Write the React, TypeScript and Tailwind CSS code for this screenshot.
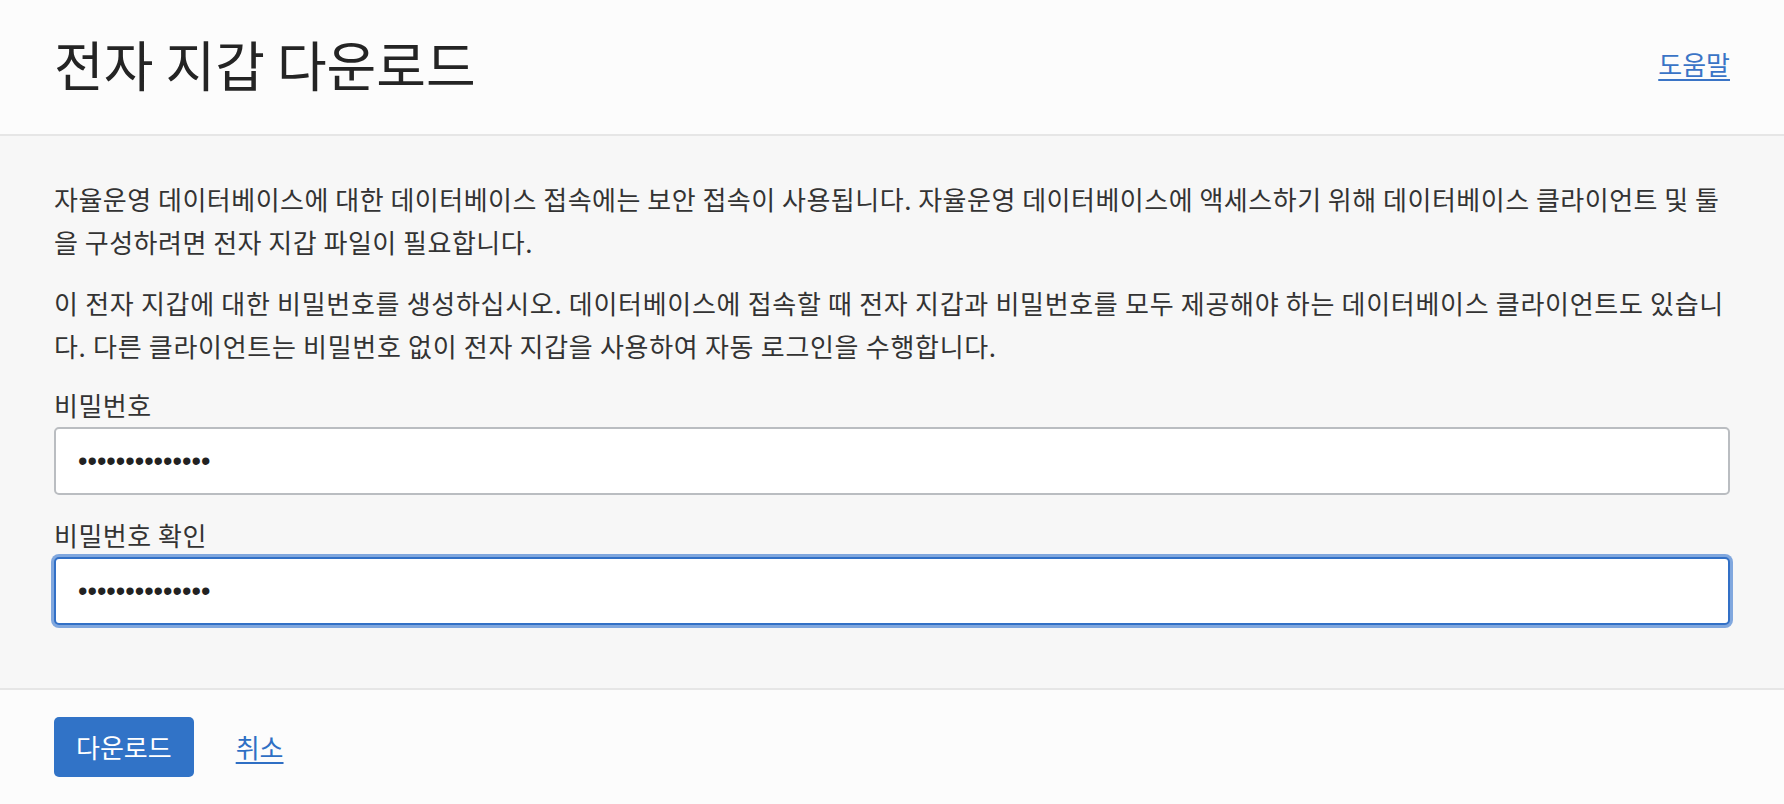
export default function App() {
  return (
    <div className="min-h-screen bg-[#fcfcfc] font-['Noto_Sans_CJK_KR',sans-serif] text-[#333333]">
      <header className="flex h-[136px] items-center justify-between border-b-2 border-[#e6e6e6] bg-[#fcfcfc] px-[54px] pb-[6px]">
        <h1 className="text-[54px] leading-none font-normal text-[#242424]">전자 지갑 다운로드</h1>
        <a href="#" className="text-[26px] leading-none text-[#3a74c6] underline decoration-2 underline-offset-[4px]">
          도움말
        </a>
      </header>

      <main className="border-b-2 border-[#e6e6e6] bg-[#f7f7f7] px-[54px] pt-[41px] pb-[63px]">
        <p className="text-[26px] leading-[43px] tracking-[0.5px]">
          자율운영 데이터베이스에 대한 데이터베이스 접속에는 보안 접속이 사용됩니다. 자율운영 데이터베이스에 액세스하기 위해 데이터베이스 클라이언트 및 툴
          <br />을 구성하려면 전자 지갑 파일이 필요합니다.
        </p>
        <p className="mt-[18px] text-[26px] leading-[43px] tracking-[0.7px]">
          이 전자 지갑에 대한 비밀번호를 생성하십시오. 데이터베이스에 접속할 때 전자 지갑과 비밀번호를 모두 제공해야 하는 데이터베이스 클라이언트도 있습니
          <br />다. 다른 클라이언트는 비밀번호 없이 전자 지갑을 사용하여 자동 로그인을 수행합니다.
        </p>

        <label htmlFor="pw" className="mt-[22px] block text-[26px] leading-[32px] tracking-[0.5px]">
          비밀번호
        </label>
        <input
          id="pw"
          type="password"
          readOnly
          value="abcdefghijklmn"
          className="mt-[6px] block h-[68px] w-full rounded-[5px] border-2 border-[#babdc1] bg-white px-[22px] font-['Liberation_Sans',sans-serif] text-[27px] text-[#222] outline-none"
        />

        <label htmlFor="pw2" className="mt-[24px] block text-[26px] leading-[32px] tracking-[0.5px]">
          비밀번호 확인
        </label>
        <input
          id="pw2"
          type="password"
          readOnly
          value="abcdefghijklmn"
          className="mt-[6px] block h-[68px] w-full rounded-[5px] border-2 border-[#3270c6] bg-white px-[22px] font-['Liberation_Sans',sans-serif] text-[27px] text-[#222] shadow-[0_0_0_3px_#80a7de] outline-none"
        />
      </main>

      <footer className="flex h-[114px] items-center gap-[42px] bg-[#fcfcfc] px-[54px]">
        <button className="h-[60px] rounded-[5px] bg-[#3173c7] px-[22px] text-[26px] leading-none text-white">
          다운로드
        </button>
        <a href="#" className="text-[26px] leading-none text-[#2f6fc4] underline decoration-2 underline-offset-[4px]">
          취소
        </a>
      </footer>
    </div>
  );
}
